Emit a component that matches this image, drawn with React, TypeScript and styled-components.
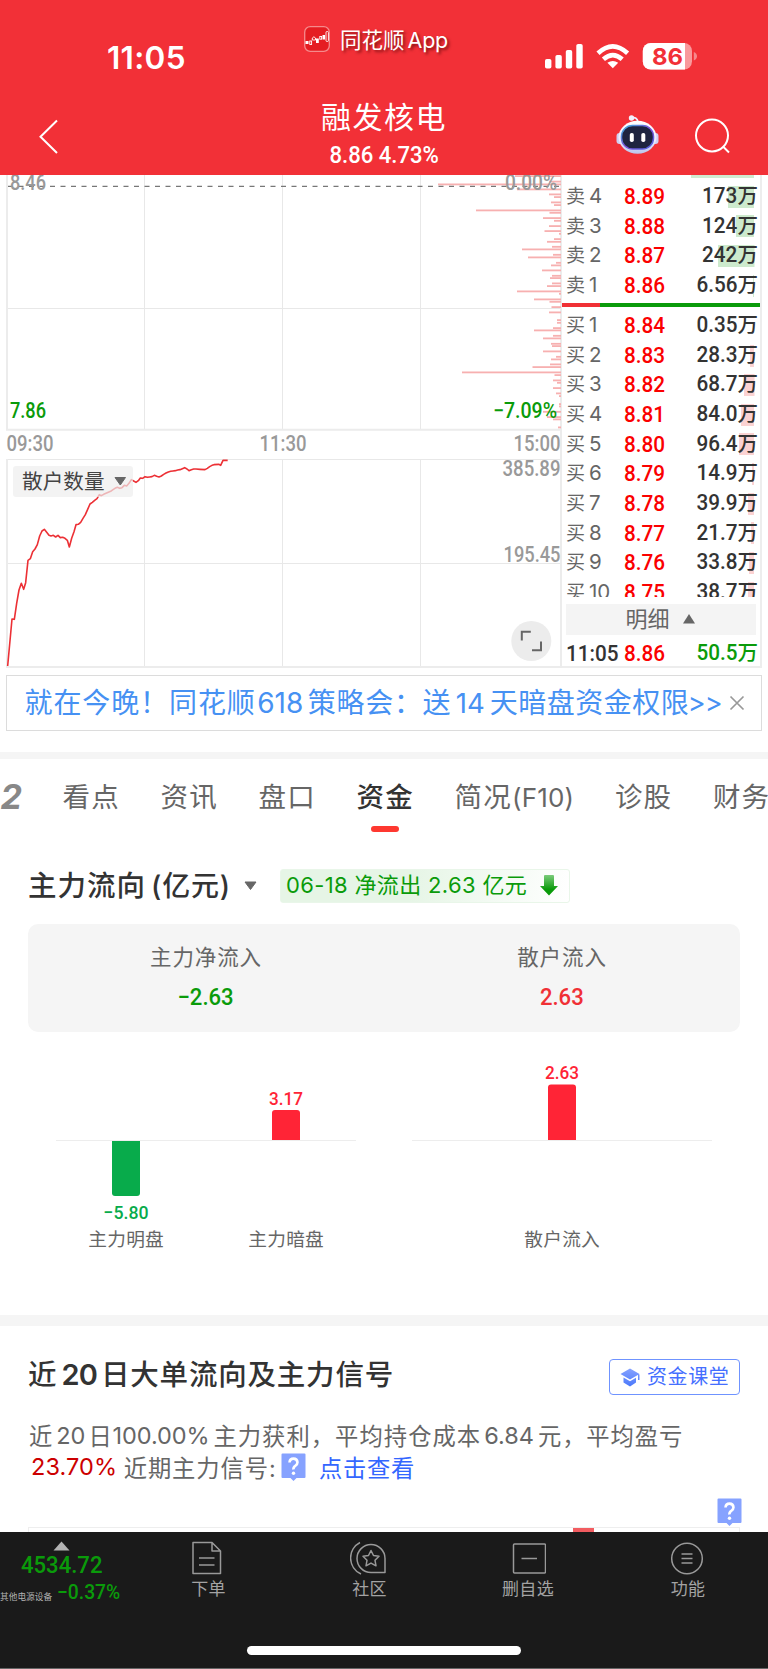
import React from "react";
import styled, { createGlobalStyle } from "styled-components";

const ui = `Inter, "Noto Sans CJK SC", sans-serif`;
const num = `Roboto, "Noto Sans CJK SC", sans-serif`;
const GREEN = "#0a9b0a";
const RED = "#f03035";

const Global = createGlobalStyle`
  * { box-sizing: border-box; }
  body { margin: 0; background: #fff; font-family: ${ui}; }
  svg { display: block; }
`;

const Page = styled.div`
  width: 768px;
  height: 1669px;
  overflow: hidden;
  display: flex;
  flex-direction: column;
  background: #fff;
`;

interface TextProps { $size: number; $ls?: number; $color?: string; $weight?: number; $ml?: number }
const Text = styled.span<TextProps>`
  font-size: ${(p) => p.$size}px;
  letter-spacing: ${(p) => p.$ls ?? 0}px;
  color: ${(p) => p.$color ?? "inherit"};
  font-weight: ${(p) => p.$weight ?? 400};
  margin-left: ${(p) => p.$ml ?? 0}px;
  white-space: pre;
`;

/* Narrow figures used for prices and quantities */
const Figure = styled.span<{ $size: number; $sx?: number; $from?: string; $color?: string }>`
  display: inline-block;
  font-family: ${num};
  font-size: ${(p) => p.$size}px;
  font-weight: 500;
  color: ${(p) => p.$color ?? "inherit"};
  transform: scaleX(${(p) => p.$sx ?? 0.92});
  transform-origin: ${(p) => p.$from ?? "left"} center;
  white-space: pre;
`;

/* ---------- header ---------- */
const Header = styled.header`
  flex: none;
  height: 175px;
  background: #f23037;
  color: #fff;
`;
const StatusBar = styled.div`
  height: 92px;
  display: grid;
  grid-template-columns: 304px 241px 1fr;
`;
const Clock = styled.div`
  padding: 38px 0 0 107px;
  line-height: 39px;
`;
const AppBadge = styled.div`
  display: flex;
  align-items: center;
  gap: 10px;
  height: 30px;
  margin-top: 24px;
  text-shadow: 2px 2px 3px rgba(70, 0, 0, 0.65);
`;
const AppName = styled.span`
  line-height: 28px;
  padding-top: 4px;
`;
const StatusIcons = styled.div`
  padding-top: 42px;
`;
const NavBar = styled.div`
  height: 83px;
  display: grid;
  grid-template-columns: 226px 316px 226px;
`;
const NavSide = styled.div<{ $left: number; $gap?: number; $top: number }>`
  display: flex;
  align-items: flex-start;
  gap: ${(p) => p.$gap ?? 0}px;
  padding: ${(p) => p.$top}px 0 0 ${(p) => p.$left}px;
`;
const NavTitle = styled.div`
  display: flex;
  flex-direction: column;
  align-items: center;
  line-height: 36px;
  padding-top: 7px;
`;
const NavPrice = styled.div`
  margin-top: 2px;
  line-height: 36px;
`;

const AppIcon = () => (
  <svg width="26" height="26" viewBox="0 0 26 26">
    <rect x="0.7" y="0.7" width="24.6" height="24.6" rx="5.5" fill="#e51d22" stroke="#f58a8c" strokeWidth="1.3" />
    <g fill="#fff">
      <rect x="1.5" y="15" width="3" height="3" />
      <rect x="12" y="12.5" width="2.8" height="4.5" />
      <rect x="18.5" y="9" width="2.5" height="4.5" />
    </g>
    <g fill="none" stroke="#fff" strokeWidth="0.9">
      <rect x="5.8" y="15" width="1.8" height="3.5" />
      <path d="M8.3 14v-2l1.6-1.2 1.6 1.2V14z" />
      <rect x="15.8" y="10.5" width="1.8" height="2.7" />
      <rect x="22" y="5.5" width="2.4" height="10" rx="1" />
    </g>
  </svg>
);

const Signals = () => (
  <svg width="160" height="30" viewBox="545 42 160 30" fill="#fff">
    <rect x="545" y="59" width="6.4" height="9.5" rx="1.8" />
    <rect x="555.4" y="55" width="6.4" height="13.5" rx="1.8" />
    <rect x="565.8" y="50" width="6.4" height="18.5" rx="1.8" />
    <rect x="576.3" y="44" width="6.4" height="24.5" rx="1.8" />
    <g fill="none" stroke="#fff" strokeWidth="4.6">
      <path d="M598 53.2Q612.7 39.5 627.6 53.2" />
      <path d="M603.4 59.3Q612.8 50.8 622.2 59.3" />
    </g>
    <path d="M607.4 62.8Q612.8 59 618.2 62.8L612.8 68.2Z" />
    <rect x="642.8" y="43" width="49.2" height="26.5" rx="8" fill="#f9999c" />
    <path d="M650.8 43H685v26.5h-34.2a8 8 0 0 1-8-8V51a8 8 0 0 1 8-8z" />
    <path d="M693.8 52q3.2 1.5 3.2 4.3t-3.2 4.3z" fill="#f7888c" />
    <text x="652" y="64.8" fontFamily="Inter" fontWeight="700" fontSize="23.5" textLength="31" lengthAdjust="spacingAndGlyphs" fill="#f23037">86</text>
  </svg>
);

const Robot = () => (
  <svg width="44" height="40" viewBox="0 0 44 40">
    <defs>
      <linearGradient id="shell" x1="0" y1="0" x2="0" y2="1">
        <stop offset="0" stopColor="#fff" />
        <stop offset="0.6" stopColor="#eceaff" />
        <stop offset="1" stopColor="#b9c3ea" />
      </linearGradient>
      <linearGradient id="rim" x1="0" y1="0" x2="1" y2="1">
        <stop offset="0" stopColor="#39b6dd" />
        <stop offset="0.5" stopColor="#7a52d8" />
        <stop offset="1" stopColor="#4e63e0" />
      </linearGradient>
    </defs>
    <path d="M15.5 3Q21 1.5 22 7" fill="none" stroke="#eef" strokeWidth="1.8" />
    <circle cx="15.5" cy="3" r="2.7" fill="#f3effc" />
    <rect x="0.5" y="18" width="7" height="11" rx="3" fill="#cfd0f2" />
    <rect x="35.5" y="18" width="7" height="11" rx="3" fill="#cfd0f2" />
    <ellipse cx="21.5" cy="22.3" rx="19" ry="16.5" fill="url(#shell)" />
    <rect x="5.5" y="10.5" width="32" height="23.5" rx="11" fill="#1e2440" stroke="url(#rim)" strokeWidth="1.5" />
    <rect x="13.8" y="18" width="4" height="9" rx="1.8" fill="#fff" />
    <rect x="25.3" y="18" width="4" height="9" rx="1.8" fill="#fff" />
  </svg>
);

/* ---------- market area ---------- */
const Market = styled.section`
  flex: none;
  height: 500px;
  display: grid;
  grid-template-columns: 562px 200px;
`;
const OrderBook = styled.div`
  height: 493px;
  border-right: 2px solid #ededed;
  border-bottom: 2px solid #ededed;
  display: flex;
  flex-direction: column;
`;
const Ladder = styled.div`
  flex: none;
  height: 422px;
  overflow: hidden;
`;
const ClippedDepth = styled.div`
  width: 63px;
  height: 2.5px;
  margin: 0 0 3.5px 129px;
  background: #d0ebd0;
`;
const LadderRow = styled.div`
  height: 29.65px;
  display: grid;
  grid-template-columns: 58px 48px 1fr;
  align-items: center;
  padding: 0 2px 0 4px;
  line-height: 29.65px;
`;
const Amount = styled.div<{ $depth: number; $tint: string }>`
  text-align: right;
  background: linear-gradient(${(p) => p.$tint}, ${(p) => p.$tint}) no-repeat;
  background-size: ${(p) => p.$depth}px 22px;
  background-position: right 3.7px center;
`;
const Ratio = styled.div`
  display: flex;
  height: 4px;
  margin: 3.5px 0 3px;
  background: linear-gradient(90deg, #f03035 38px, #0a9b0a 38px);
`;
const DetailBar = styled.div`
  flex: none;
  display: flex;
  align-items: center;
  justify-content: center;
  gap: 13px;
  height: 31px;
  margin: 7px 4px 3px;
  background: #f4f4f4;
  color: #666;
  padding: 0 2px 1px 0;
  line-height: 28px;
`;

const sells: [string, string, string, number][] = [
  ["4", "8.89", "173", 26], ["3", "8.88", "124", 18], ["2", "8.87", "242", 36.5], ["1", "8.86", "6.56", 1],
];
const buys: [string, string, string, number][] = [
  ["1", "8.84", "0.35", 0], ["2", "8.83", "28.3", 4], ["3", "8.82", "68.7", 10.5], ["4", "8.81", "84.0", 13],
  ["5", "8.80", "96.4", 15], ["6", "8.79", "14.9", 2], ["7", "8.78", "39.9", 6], ["8", "8.77", "21.7", 3],
  ["9", "8.76", "33.8", 5], ["10", "8.75", "38.7", 6],
];

const Level = ({ side, row }: { side: string; row: [string, string, string, number] }) => (
  <LadderRow>
    <span>
      <Text $size={19} $color="#666">{side}</Text>
      <Text $size={20.5} $color="#666" $ml={4}>{row[0]}</Text>
    </span>
    <Figure $size={22.5} $color="#fb0000">{row[1]}</Figure>
    <Amount $depth={row[3]} $tint={side === "卖" ? "#cdeacd" : "#fbd2d2"}>
      <Figure $size={22.5} $from="right" $color="#333">{row[2]}</Figure>
      <Text $size={20.5} $weight={500} $color="#333">万</Text>
    </Amount>
  </LadderRow>
);

/* [offset from top, bar length] of each price bucket */
const buckets: [number, number][] = [
  [1, 46], [6.5, 12], [9.3, 123], [14.3, 44], [19.3, 12], [22, 7], [27.3, 10], [30, 7], [35.3, 85], [37.7, 11.5],
  [43, 18], [45.7, 7], [51, 12], [56, 16.5], [58.7, 2], [64, 7], [66.7, 14], [71.7, 9], [74.3, 39], [79.7, 8],
  [82.3, 33], [87.7, 5], [90.3, 10], [95.3, 19], [100.7, 9], [103, 11], [108.3, 9], [111, 14], [116.3, 44], [118.7, 2],
  [124.3, 27], [126.7, 11.5], [132, 9.5], [137.3, 12], [145, 4], [147.7, 4], [153, 8], [155.3, 27], [160.7, 8],
  [163.3, 18], [168.7, 10], [171, 9], [176.3, 18], [181.7, 5], [184.3, 10], [189.3, 11], [192, 28.5], [197.3, 99],
  [200, 6.5], [205.3, 8], [207.7, 4], [213, 8], [218.3, 5], [221, 2], [229, 2], [231.3, 2], [236.7, 18], [242, 14],
  [244.3, 8], [252.3, 3],
];
const retail = "23,708 36,567 43,568 50,520 57,480 64,460 71,478 77,458 84,391 91,386 98,365 105,357 112,344 119,318 126,303 133,298 140,307 147,316 153,318 160,316 167,321 174,316 181,323 188,322 195,325 202,331 208,351 215,325 222,305 228,284 235,283 242,277 249,265 256,254 263,238 270,222 277,217 284,211 291,206 298,194 304,197 311,193 318,190 325,187 332,184 339,179 345,175 352,172 359,175 366,173 373,166 380,168 387,160 394,149 401,153 408,157 415,152 421,144 428,145 435,140 442,142 449,141 456,140 463,136 470,139 477,141 484,138 491,133 498,129 505,126 512,124 519,123 526,122 533,120 540,119 547,116 554,113 561,117 567,122 574,119 581,117 588,117 600,118 615,119 622,115 629,110 636,106 642,104 656,103 662,106 669,91 683,91";

const Label = ({ x, y, w, fill = "#999", children }: { x: number; y: number; w: number; fill?: string; children: string }) => (
  <text x={x} y={y} textLength={w} lengthAdjust="spacingAndGlyphs" fill={fill} fontFamily={num} fontSize="21.5" fontWeight="500">{children}</text>
);

const Charts = () => (
  <svg width="562" height="500" viewBox="0 175 562 500">
    <g stroke="#e8e8e8" strokeWidth="1">
      <path d="M144.5 175V430M282.5 175V430M420.5 175V430M8 308.5H561M144.5 459V667M282.5 459V667M420.5 459V667M8 563.5H561M6 459.5H561" />
      <path d="M7 175V430M6 429.8H561M7 459V667M6 667H562M561 175V668" strokeWidth="2" stroke="#ececec" />
    </g>
    {buckets.map(([y, w]) => (
      <rect key={y} x={561 - w} y={174.2 + y} width={w} height="1.8" fill="#f7b0b0" />
    ))}
    <path d="M8 186.4H561" stroke="#777" strokeWidth="1.2" strokeDasharray="5 5.5" />
    <Label x={10} y={190} w={36}>8.46</Label>
    <Label x={505} y={190} w={52}>0.00%</Label>
    <Label x={10} y={418} w={36} fill={GREEN}>7.86</Label>
    <Label x={493} y={418} w={64} fill={GREEN}>−7.09%</Label>
    <Label x={6.5} y={451} w={47}>09:30</Label>
    <Label x={259.5} y={451} w={47}>11:30</Label>
    <Label x={513.5} y={451} w={47}>15:00</Label>
    <Label x={502.5} y={476.3} w={58}>385.89</Label>
    <Label x={503.5} y={561.5} w={57}>195.45</Label>
    <polyline points={retail} transform="translate(0 430) scale(0.33333)" fill="none" stroke="#ec3035" strokeWidth="4.8" strokeLinejoin="round" />
    <rect x="13" y="466" width="120" height="31" rx="3" fill="#eeeeee" fillOpacity="0.7" />
    <text x="22" y="489" fontFamily={ui} fontSize="20.6" textLength="82.5" fill="#444">散户数量</text>
    <path d="M115 477.5h10.5l-5.2 7.5z" fill="#666" stroke="#666" strokeLinejoin="round" />
    <circle cx="531.3" cy="641" r="20" fill="#ececec" />
    <path d="M521.8 640.5v-8.8h9M532 650.3h9v-8.8" fill="none" stroke="#666" strokeWidth="2" />
  </svg>
);

/* ---------- banner ---------- */
const Banner = styled.div`
  flex: none;
  height: 56px;
  margin: 0 6px;
  border: 1.5px solid #dcdcdc;
  padding-left: 17.5px;
  display: flex;
  align-items: center;
  color: #4691f3;
  line-height: 54px;
`;
const CloseIcon = styled.svg`
  margin-left: 7px;
`;

/* ---------- tabs ---------- */
const Divider = styled.div<{ $h: number; $top: number }>`
  flex: none;
  height: ${(p) => p.$h}px;
  margin-top: ${(p) => p.$top}px;
  background: #f5f5f5;
`;
const Tabs = styled.nav`
  flex: none;
  height: 95px;
  display: flex;
  gap: 40.6px;
  overflow: hidden;
  color: #666;
`;
const Tab = styled.div<{ $active?: boolean }>`
  flex: none;
  display: flex;
  flex-direction: column;
  align-items: center;
  padding-top: 18px;
  font-size: 27.5px;
  letter-spacing: 1.2px;
  line-height: 40px;
  white-space: nowrap;
  color: ${(p) => (p.$active ? "#333" : "#666")};
  font-weight: ${(p) => (p.$active ? 500 : 400)};
`;
const ClippedTab = styled(Tab)`
  width: 22px;
  align-items: flex-end;
  font-size: 34px;
  font-style: italic;
  font-weight: 700;
  letter-spacing: 0;
  color: #888;
`;
const Underline = styled.i`
  width: 28px;
  height: 6px;
  margin-top: 9px;
  border-radius: 3px;
  background: #fe3830;
`;

/* ---------- fund flow ---------- */
const FlowHead = styled.div`
  flex: none;
  height: 70px;
  padding: 15px 0 0 28px;
  display: flex;
  align-items: flex-start;
`;
const Heading = styled.h2`
  margin: 0;
  line-height: 34px;
  color: #333;
  font-weight: 500;
  width: 216px;
  white-space: nowrap;
`;
const Caret = styled.svg`
  margin: 12px 23px 0 0;
`;
const FlowBadge = styled.div`
  width: 290px;
  height: 34px;
  border: 1px solid #e9f6e9;
  border-radius: 3px;
  background: linear-gradient(100deg, #e6f5e6 0%, #e6f5e6 45%, #fff 100%);
  display: flex;
  align-items: center;
  justify-content: space-between;
  padding: 0 10px 2px 5px;
  line-height: 30px;
`;
const Summary = styled.div`
  flex: none;
  height: 108px;
  margin: 0 28px;
  border-radius: 10px;
  background: #f5f5f5;
  display: grid;
  grid-template-columns: 1fr 1fr;
  padding-top: 14px;
`;
const SummaryCell = styled.div`
  display: flex;
  flex-direction: column;
  align-items: center;
  gap: 1.5px;
  line-height: 38px;
`;

interface Bar { x: number; value: string; name: string; from: number; to: number; up: boolean; vy: number; vw: number }
const bars: Bar[] = [
  { x: 126, value: "−5.80", name: "主力明盘", from: 1141, to: 1196, up: false, vy: 1218.7, vw: 45 },
  { x: 286, value: "3.17", name: "主力暗盘", from: 1110, to: 1140, up: true, vy: 1105, vw: 34 },
  { x: 562, value: "2.63", name: "散户流入", from: 1084.5, to: 1140, up: true, vy: 1079.3, vw: 34 },
];
const BarChart = () => (
  <svg width="768" height="283" viewBox="0 1032 768 283" textAnchor="middle">
    <path d="M56 1140.5H356M412 1140.5H712" stroke="#ededed" />
    {bars.map((b) => {
      const c = b.up ? "#ff2436" : "#08ab4b";
      const h = b.to - b.from;
      return (
        <g key={b.name} fill={c}>
          <path
            d={b.up
              ? `M${b.x - 14} ${b.to}v${-h + 3}q0-3 3-3h22q3 0 3 3v${h - 3}z`
              : `M${b.x - 14} ${b.from}v${h - 3}q0 3 3 3h22q3 0 3-3v${-h + 3}z`}
          />
          <text x={b.x} y={b.vy} fontFamily={num} fontWeight="500" fontSize="19" textLength={b.vw} lengthAdjust="spacingAndGlyphs">{b.value}</text>
          <text x={b.x} y="1246" fontFamily={ui} fontSize="18.7" textLength="75.5" fill="#666">{b.name}</text>
        </g>
      );
    })}
  </svg>
);

/* ---------- signals ---------- */
const SignalHead = styled.div`
  flex: none;
  height: 86px;
  padding: 32px 28px 0 28px;
  display: flex;
  justify-content: space-between;
`;
const CourseButton = styled.div`
  width: 131px;
  height: 36px;
  margin-top: 1px;
  border: 1.5px solid #6f93ff;
  border-radius: 4px;
  display: flex;
  align-items: center;
  gap: 7px;
  padding-left: 10px;
  line-height: 33px;
`;
const Paragraph = styled.div`
  flex: none;
  height: 86px;
  padding: 7.5px 0 0 29px;
  color: #666;
`;
const Line = styled.div`
  display: flex;
  align-items: center;
  height: 31.5px;
`;
const InlineHelp = styled.div`
  margin: 2px 0 0 4px;
`;
const HelpRow = styled.div`
  flex: none;
  height: 29px;
  display: flex;
  justify-content: flex-end;
  padding: 0 26px 0 0;
`;
const SignalChart = styled.div`
  flex: none;
  height: 5px;
  margin: 0 28px;
  border: 1px solid #eee;
  border-bottom: 0;
  background: linear-gradient(#f25c60, #f25c60) 545px 0 / 21px 5px no-repeat border-box;
`;
const Help = () => (
  <svg width="25" height="29" viewBox="0 0 25 29">
    <path d="M1.5 0.5h22q1 0 1 1v22.5q0 1-1 1h-8l-3 3-3-3h-8q-1 0-1-1v-22.5q0-1 1-1z" fill="#86a2ff" />
    <path d="M8.5 9.5Q8.8 5.6 12.5 5.6T16.5 9.3Q16.5 11.5 14.3 12.8T12.5 16.5" fill="none" stroke="#fff" strokeWidth="2.6" />
    <circle cx="12.5" cy="20.3" r="1.7" fill="#fff" />
  </svg>
);

/* ---------- bottom bar ---------- */
const BottomBar = styled.footer`
  flex: none;
  height: 137px;
  background: #1a1a1a;
  color: #a3a3a3;
  border-bottom: 1px solid #666;
`;
const BottomItems = styled.div`
  height: 114px;
  display: grid;
  grid-template-columns: 128px repeat(4, 160px);
`;
const IndexCell = styled.div`
  padding-top: 9px;
  color: #0a9b0a;
  display: flex;
  flex-direction: column;
`;
const IndexValue = styled.div`
  line-height: 30px;
  padding-left: 20.5px;
  margin-top: -1px;
`;
const IndexChange = styled.div`
  display: flex;
  align-items: flex-end;
  gap: 5px;
  height: 24px;
`;
const IndexName = styled.div`
  line-height: 12px;
  padding-bottom: 3px;
`;
const IndexPercent = styled.div`
  line-height: 24px;
  padding-bottom: 1px;
`;
const BottomItem = styled.div`
  display: flex;
  flex-direction: column;
  align-items: center;
  padding-top: 9px;
  line-height: 26px;
`;
const ItemLabel = styled.div<{ $shift?: number }>`
  margin: 1px 0 0 ${(p) => p.$shift ?? 0}px;
  font-size: 17px;
  letter-spacing: 0.3px;
`;
const HomeIndicator = styled.div`
  width: 274px;
  height: 9px;
  margin: 0 auto;
  border-radius: 5px;
  background: #fff;
`;
const BottomIcon = ({ children }: { children: React.ReactNode }) => (
  <svg width="36" height="34" viewBox="0 0 36 34" fill="none" stroke="#999" strokeWidth="1.5" strokeLinejoin="round">{children}</svg>
);

export default function App() {
  return (
    <Page>
      <Global />
      <Header>
        <StatusBar>
          <Clock><Text $size={31.5} $weight={600} $ls={0.3}>11:05</Text></Clock>
          <AppBadge>
            <AppIcon />
            <AppName>
              <Text $size={21.5}>同花顺</Text>
              <Text $size={21.5} $ml={3} $ls={-0.2}>App</Text>
            </AppName>
          </AppBadge>
          <StatusIcons><Signals /></StatusIcons>
        </StatusBar>
        <NavBar>
          <NavSide $left={38} $top={26}>
            <svg width="22" height="38" viewBox="0 0 22 38"><path d="M19 2.5L2.5 18.8 19 35" fill="none" stroke="#fff" strokeWidth="2" /></svg>
          </NavSide>
          <NavTitle>
            <Text $size={30} $ls={1.5}>融发核电</Text>
            <NavPrice><Figure $size={23.5} $sx={0.94} $from="center">8.86 4.73%</Figure></NavPrice>
          </NavTitle>
          <NavSide $left={73.5} $top={23} $gap={35}>
            <Robot />
            <svg width="38" height="40" viewBox="0 0 38 40" fill="none" stroke="#fff" strokeWidth="2">
              <circle cx="17" cy="20.5" r="16" /><path d="M28 31.5l6 6" />
            </svg>
          </NavSide>
        </NavBar>
      </Header>

      <Market>
        <Charts />
        <OrderBook>
          <Ladder>
            <ClippedDepth />
            {sells.map((r) => <Level key={r[0]} side="卖" row={r} />)}
            <Ratio />
            {buys.map((r) => <Level key={r[0]} side="买" row={r} />)}
          </Ladder>
          <DetailBar>
            <Text $size={22}>明细</Text>
            <svg width="12" height="10" viewBox="0 0 12 10"><path d="M6 0l6 9.5H0z" fill="#666" /></svg>
          </DetailBar>
          <LadderRow>
            <Figure $size={22.5} $color="#333">11:05</Figure>
            <Figure $size={22.5} $color="#fb0000">8.86</Figure>
            <Amount $depth={0} $tint="#fff">
              <Figure $size={22.5} $from="right" $color={GREEN}>50.5</Figure>
              <Text $size={20.5} $weight={500} $color={GREEN}>万</Text>
            </Amount>
          </LadderRow>
        </OrderBook>
      </Market>

      <Banner>
        <Text $size={28} $ls={0.9}>就在今晚！同花顺</Text>
        <Text $size={28} $ml={1.5}>618</Text>
        <Text $size={28} $ls={0.7} $ml={4.5}>策略会：送</Text>
        <Text $size={27.5} $ml={4.5}>14</Text>
        <Text $size={28} $ls={0.5} $ml={5}>天暗盘资金权限</Text>
        <Text $size={27} $ls={-0.8} $ml={-1.5}>&gt;&gt;</Text>
        <CloseIcon width="16" height="16" viewBox="0 0 16 16" stroke="#999" strokeWidth="1.7"><path d="M1.5 1.5l13 13M14.5 1.5l-13 13" /></CloseIcon>
      </Banner>

      <Divider $h={7} $top={21} />
      <Tabs>
        <ClippedTab>2</ClippedTab>
        <Tab>看点</Tab>
        <Tab>资讯</Tab>
        <Tab>盘口</Tab>
        <Tab $active>资金<Underline /></Tab>
        <Tab><span>简况<Text $size={26} $ls={0.2}>(F10)</Text></span></Tab>
        <Tab>诊股</Tab>
        <Tab>财务</Tab>
      </Tabs>

      <FlowHead>
        <Heading>
          <Text $size={28.5} $weight={500} $ls={1}>主力流向</Text>
          <Text $size={28} $weight={500} $ls={0.8} $ml={5}>(亿元)</Text>
        </Heading>
        <Caret width="13" height="10" viewBox="0 0 13 10"><path d="M1 1h11L6.5 8.5z" fill="#666" stroke="#666" strokeLinejoin="round" /></Caret>
        <FlowBadge>
          <Text $size={22} $ls={0.35} $color={GREEN}>06-18 净流出 2.63 亿元</Text>
          <svg width="20" height="22" viewBox="0 0 20 22">
            <defs><linearGradient id="down" x1="0" y1="0" x2="0" y2="1"><stop offset="0" stopColor="#7bcb7b" /><stop offset="0.7" stopColor="#0a9b0a" /></linearGradient></defs>
            <path d="M5 2q0-1 1-1h8q1 0 1 1v10h4L10 21.5 1 12h4z" fill="url(#down)" />
          </svg>
        </FlowBadge>
      </FlowHead>

      <Summary>
        <SummaryCell>
          <Text $size={21.5} $ls={0.9} $color="#666">主力净流入</Text>
          <Figure $size={24} $from="center" $color={GREEN}>−2.63</Figure>
        </SummaryCell>
        <SummaryCell>
          <Text $size={21.5} $ls={0.9} $color="#666">散户流入</Text>
          <Figure $size={24} $from="center" $color={RED}>2.63</Figure>
        </SummaryCell>
      </Summary>

      <BarChart />
      <Divider $h={11} $top={0} />

      <SignalHead>
        <Heading>
          <Text $size={28.5} $weight={500} $ls={0.9}>近</Text>
          <Text $size={29} $weight={600} $ls={-0.8} $ml={4}>20</Text>
          <Text $size={28.5} $weight={500} $ls={0.8} $ml={4}>日大单流向及主力信号</Text>
        </Heading>
        <CourseButton>
          <svg width="20" height="19" viewBox="0 0 20 19">
            <defs><linearGradient id="cap" x1="0" y1="0" x2="0" y2="1"><stop offset="0" stopColor="#86a2ff" /><stop offset="1" stopColor="#4a78fb" /></linearGradient></defs>
            <path d="M10 0.5L19.5 6 10 11.5 0.5 6z M3.5 9.5L10 13.3 16 9.7V14.5L10 18.5 3.5 14.5z M18 6.5h1.5V12H18z" fill="url(#cap)" />
          </svg>
          <Text $size={20} $ls={0.6} $color="#456fff">资金课堂</Text>
        </CourseButton>
      </SignalHead>

      <Paragraph>
        <Line>
          <Text $size={23.3} $ls={0.9}>近</Text>
          <Text $size={23.5} $ml={3}>20</Text>
          <Text $size={23.3} $ls={0.9} $ml={3}>日</Text>
          <Text $size={23.5} $ls={-0.1}>100.00%</Text>
          <Text $size={23.3} $ls={1.05} $ml={4}>主力获利，平均持仓成本</Text>
          <Text $size={23.5} $ml={3}>6.84</Text>
          <Text $size={23.3} $ls={0.9} $ml={4}>元，平均盈亏</Text>
        </Line>
        <Line>
          <Text $size={23.5} $color="#cc0000" $ml={2} $ls={0.1}>23.70%</Text>
          <Text $size={23.3} $ls={0.9} $ml={6.5}>近期主力信号:</Text>
          <InlineHelp><Help /></InlineHelp>
          <Text $size={23.3} $ls={0.7} $color="#3366ff" $ml={13.5}>点击查看</Text>
        </Line>
      </Paragraph>
      <HelpRow><Help /></HelpRow>
      <SignalChart />

      <BottomBar>
        <BottomItems>
          <IndexCell>
            <svg width="70" height="10" viewBox="0 0 70 10"><path d="M61.5 0.5L69.5 9.5H53.5z" fill="#b3b3b3" /></svg>
            <IndexValue><Figure $size={24} $sx={0.92}>4534.72</Figure></IndexValue>
            <IndexChange>
              <IndexName><Text $size={8.7} $color="#b3b3b3">其他电源设备</Text></IndexName>
              <IndexPercent><Figure $size={20.5} $sx={0.94}>−0.37%</Figure></IndexPercent>
            </IndexChange>
          </IndexCell>
          <BottomItem>
            <BottomIcon>
              <path d="M3 1.5H22L30.5 10V32.5H3zM22 1.5V10H30.5M9 17H24.5M9 24H24.5" />
            </BottomIcon>
            <ItemLabel $shift={1}>下单</ItemLabel>
          </BottomItem>
          <BottomItem>
            <BottomIcon>
              <path d="M21 3.5A14 14 0 1 0 21 31.5H35V17.5A14 14 0 0 0 21 3.5zM10 1.5A17.5 17.5 0 0 0 11 33" />
              <path d="M21 9.5l2.5 5 5.5.8-4 4 1 5.5-5-2.700-5 2.700 1-5.5-4-4 5.5-.8z" />
            </BottomIcon>
            <ItemLabel $shift={3}>社区</ItemLabel>
          </BottomItem>
          <BottomItem>
            <BottomIcon>
              <rect x="3.5" y="3" width="32" height="29" rx="1" /><path d="M11.5 17.5H27" />
            </BottomIcon>
            <ItemLabel>删自选</ItemLabel>
          </BottomItem>
          <BottomItem>
            <BottomIcon>
              <circle cx="17" cy="17.5" r="15.3" /><path d="M11.5 13H22.5M11.5 17.5H22.5M11.5 22H22.5" />
            </BottomIcon>
            <ItemLabel>功能</ItemLabel>
          </BottomItem>
        </BottomItems>
        <HomeIndicator />
      </BottomBar>
    </Page>
  );
}
